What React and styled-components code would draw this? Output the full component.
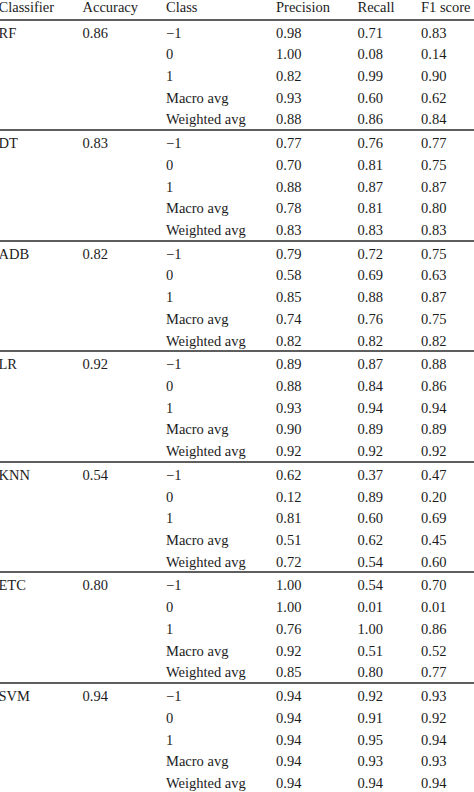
import React from "react";
import styled, { createGlobalStyle } from "styled-components";

const Global = createGlobalStyle`
  html, body {
    margin: 0;
    padding: 0;
    background: #ffffff;
    overflow: hidden;
  }
  body {
    font-family: "Liberation Serif", "Times New Roman", serif;
    color: #1c1c1c;
  }
`;

const COLS = "84px 83.5px 110px 81.5px 63.5px 1fr";

const Table = styled.div`
  width: 477px;
  margin-left: -1.5px;
  font-size: 14.5px;
  font-family: "Liberation Serif", "Times New Roman", serif;
  color: #1c1c1c;
`;

const HeaderRow = styled.div`
  display: grid;
  grid-template-columns: ${COLS};
  height: 18.5px;
  line-height: 15px;
  white-space: nowrap;
`;

const Block = styled.div`
  border-top: 2px solid #5e5e5e;
  height: 108.6px;
`;

const Row = styled.div`
  display: grid;
  grid-template-columns: ${COLS};
  padding-top: 3px;
  height: 18.72px;
  line-height: 18.72px;
  white-space: nowrap;
`;

const Cell = styled.div`
  overflow: visible;
`;

const data = [
  { name: "RF", acc: "0.86", rows: [["0.98", "0.71", "0.83"], ["1.00", "0.08", "0.14"], ["0.82", "0.99", "0.90"], ["0.93", "0.60", "0.62"], ["0.88", "0.86", "0.84"]] },
  { name: "DT", acc: "0.83", rows: [["0.77", "0.76", "0.77"], ["0.70", "0.81", "0.75"], ["0.88", "0.87", "0.87"], ["0.78", "0.81", "0.80"], ["0.83", "0.83", "0.83"]] },
  { name: "ADB", acc: "0.82", rows: [["0.79", "0.72", "0.75"], ["0.58", "0.69", "0.63"], ["0.85", "0.88", "0.87"], ["0.74", "0.76", "0.75"], ["0.82", "0.82", "0.82"]] },
  { name: "LR", acc: "0.92", rows: [["0.89", "0.87", "0.88"], ["0.88", "0.84", "0.86"], ["0.93", "0.94", "0.94"], ["0.90", "0.89", "0.89"], ["0.92", "0.92", "0.92"]] },
  { name: "KNN", acc: "0.54", rows: [["0.62", "0.37", "0.47"], ["0.12", "0.89", "0.20"], ["0.81", "0.60", "0.69"], ["0.51", "0.62", "0.45"], ["0.72", "0.54", "0.60"]] },
  { name: "ETC", acc: "0.80", rows: [["1.00", "0.54", "0.70"], ["1.00", "0.01", "0.01"], ["0.76", "1.00", "0.86"], ["0.92", "0.51", "0.52"], ["0.85", "0.80", "0.77"]] },
  { name: "SVM", acc: "0.94", rows: [["0.94", "0.92", "0.93"], ["0.94", "0.91", "0.92"], ["0.94", "0.95", "0.94"], ["0.94", "0.93", "0.93"], ["0.94", "0.94", "0.94"]] },
];

const classes = ["\u22121", "0", "1", "Macro avg", "Weighted avg"];

export default function App() {
  return (
    <>
      <Global />
      <Table>
        <HeaderRow>
          <Cell>Classifier</Cell>
          <Cell>Accuracy</Cell>
          <Cell>Class</Cell>
          <Cell>Precision</Cell>
          <Cell>Recall</Cell>
          <Cell>F1 score</Cell>
        </HeaderRow>
        {data.map((b) => (
          <Block key={b.name}>
            {b.rows.map((r, i) => (
              <Row key={i}>
                <Cell>{i === 0 ? b.name : ""}</Cell>
                <Cell>{i === 0 ? b.acc : ""}</Cell>
                <Cell>{classes[i]}</Cell>
                <Cell>{r[0]}</Cell>
                <Cell>{r[1]}</Cell>
                <Cell>{r[2]}</Cell>
              </Row>
            ))}
          </Block>
        ))}
      </Table>
    </>
  );
}
